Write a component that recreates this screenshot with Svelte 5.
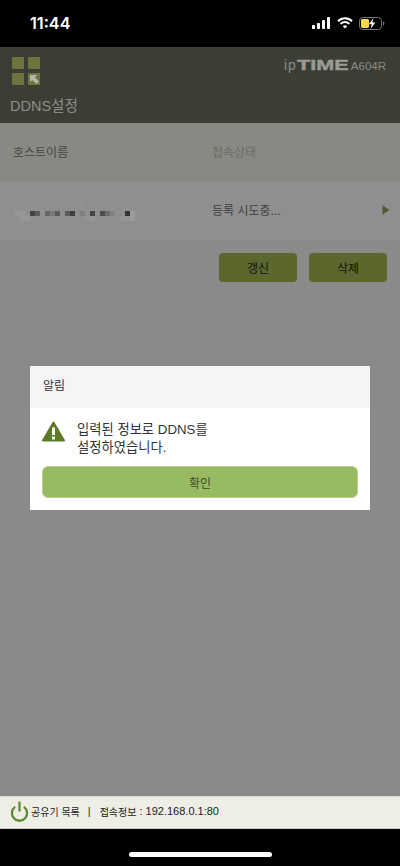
<script>
    // mosaic over the host name, one list per row of 5px cells
    const base = '#8f8f8f';
    const mosaic = [
        [base,base,base,base,base,base,base,base,base,base,base,base,base,'#929292',base,base,base,base,base,base,base,base,base,base,base],
        [base,base,base,base,base,base,base,base,base,base,base,base,base,'#939393',base,base,base,base,base,base,base,base,base,base,base],
        ['#989898','#979797',base,'#444','#5c5c5c',base,'#666','#7b7b7b','#5a5a5a',base,'#5c5c5c','#3f3f3f',base,'#7f7f7f',base,'#444',base,'#4c4c4c','#6d6d6d','#828282',base,base,'#333','#9c9c9c',base],
        [base,'#979797','#979797',base,base,base,base,base,base,base,base,base,base,base,'#949494','#979797',base,base,base,base,base,'#949494','#969696','#9b9b9b',base],
    ];
</script>

<div class="page">
    <div class="status">
        <span class="time">11:44</span>
        <div class="status-icons">
            <svg width="19" height="12" viewBox="0 0 19 12" fill="#fff">
                <rect x="0" y="8" width="3" height="4" rx="0.8"/>
                <rect x="5" y="6" width="3" height="6" rx="0.8"/>
                <rect x="10" y="3" width="3" height="9" rx="0.8"/>
                <rect x="15" y="0" width="3" height="12" rx="0.8"/>
            </svg>
            <svg width="16" height="12" viewBox="0 0 16 12" fill="none" stroke="#fff" stroke-width="2">
                <path d="M1 4.2a10 10 0 0 1 14 0"/>
                <path d="M3.6 6.9a6.2 6.2 0 0 1 8.8 0"/>
                <path d="M8 11.6 5.9 9.4a3 3 0 0 1 4.2 0z" fill="#fff" stroke="none"/>
            </svg>
            <svg width="26" height="13" viewBox="0 0 26 13">
                <rect x="0.5" y="0.5" width="22" height="12" rx="3.2" fill="none" stroke="#77766f"/>
                <rect x="2" y="2" width="8" height="9" rx="1.4" fill="#f6d94a"/>
                <path d="M14.5 1 9.8 7.2h3l-1.3 4.8 4.9-6.4h-3.1z" fill="#fff"/>
                <path d="M24 4.5c1 .3 1.4 1.2 1.4 2s-.4 1.7-1.4 2z" fill="#77766f"/>
            </svg>
        </div>
    </div>

    <header>
        <div class="header-top">
            <div class="logo-grid">
                <span></span>
                <span></span>
                <span></span>
                <span class="arrow">
                    <svg width="12" height="12" viewBox="0 0 12 12" fill="#b6b8a6">
                        <path d="M2 2h7L7 4.2 11 8.4 8.4 11 4.2 7 2 9z"/>
                    </svg>
                </span>
            </div>
            <div class="brand">
                <span class="ip">ip</span><span class="brand-time">TIME</span><span class="model">A604R</span>
            </div>
        </div>
        <h1>DDNS설정</h1>
    </header>

    <main>
        <div class="table-head">
            <span class="col-host">호스트이름</span>
            <span class="col-state">접속상태</span>
        </div>
        <div class="table-row">
            <div class="mosaic">
                {#each mosaic as line}
                    <div class="mosaic-line">
                        {#each line as cell}
                            <i style="background:{cell}"></i>
                        {/each}
                    </div>
                {/each}
            </div>
            <span class="row-state">등록 시도중...</span>
            <svg class="row-arrow" width="8" height="10" viewBox="0 0 8 10" fill="#50592f">
                <path d="M0.5 0.3 7.5 5 0.5 9.7z"/>
            </svg>
        </div>
        <div class="actions">
            <button>갱신</button>
            <button>삭제</button>
        </div>

        <div class="dialog">
            <div class="dialog-title">알림</div>
            <div class="dialog-body">
                <div class="message">
                    <svg width="23" height="21" viewBox="0 0 23 21">
                        <path d="M11.5 1.5 22 19.5H1z" fill="#5c7a28" stroke="#5c7a28" stroke-width="2" stroke-linejoin="round"/>
                        <rect x="10" y="6.5" width="3" height="7.5" fill="#fff"/>
                        <rect x="10" y="15.5" width="3" height="3" fill="#fff"/>
                    </svg>
                    <p>입력된 정보로 DDNS를<br>설정하였습니다.</p>
                </div>
                <button class="confirm">확인</button>
            </div>
        </div>
    </main>

    <footer>
        <svg width="19" height="21" viewBox="0 0 20 22" fill="none" stroke="#5f8a2e" stroke-width="2.4">
            <path d="M5.4 6.2a8 8 0 1 0 9.2 0"/>
            <path d="M10 0.5V11"/>
        </svg>
        <span class="footer-ko">공유기 목록</span>
        <span class="footer-sep">|</span>
        <span class="footer-ko">접속정보</span>
        <span class="footer-addr">: 192.168.0.1:80</span>
    </footer>

    <div class="home-area">
        <div class="home-bar"></div>
    </div>
</div>

<style>
    :global(body) {
        margin: 0;
        background: #000;
    }

    .page {
        width: 400px;
        height: 866px;
        display: flex;
        flex-direction: column;
        font-family: "Liberation Sans", "Noto Sans CJK KR", sans-serif;
        overflow: hidden;
    }

    .status {
        height: 47px;
        flex: none;
        background: #000;
        display: flex;
        align-items: center;
        justify-content: space-between;
        padding: 0 15px 0 30px;
        box-sizing: border-box;
    }

    .time {
        color: #fff;
        font-family: Inter, sans-serif;
        font-size: 16.2px;
        font-weight: 600;
        margin-bottom: 1px;
    }

    .status-icons {
        display: flex;
        align-items: center;
        gap: 6px;
        margin-bottom: 1px;
    }

    header {
        height: 76px;
        flex: none;
        background: #3c3e36;
        box-sizing: border-box;
        padding: 10px 14px 0 12px;
    }

    .header-top {
        display: flex;
        justify-content: space-between;
        align-items: flex-start;
    }

    .logo-grid {
        display: grid;
        grid-template-columns: 12px 12px;
        grid-auto-rows: 12px;
        gap: 4px;
    }

    .logo-grid span {
        background: #6f733d;
    }

    .logo-grid .arrow {
        display: flex;
    }

    .brand {
        display: flex;
        align-items: baseline;
        color: #8a8b85;
    }

    .ip {
        font-size: 14px;
        letter-spacing: 1px;
    }

    .brand-time {
        font-size: 14px;
        font-weight: 700;
        width: 50px;
        display: inline-block;
        transform: scaleX(1.55);
        transform-origin: left;
        color: #9a9b95;
        -webkit-text-stroke: 0.4px #9a9b95;
    }

    .model {
        font-size: 11.5px;
        margin-left: 4px;
    }

    h1 {
        margin: 9px 0 0 -2px;
        font-size: 14.5px;
        font-weight: 400;
        color: #8c8d87;
    }

    main {
        flex: 1;
        background: #8a8a8a;
        position: relative;
    }

    .table-head {
        height: 59px;
        background: #888983;
        display: flex;
        align-items: center;
        font-size: 12px;
        padding-bottom: 2px;
        box-sizing: border-box;
    }

    .col-host {
        margin-left: 13px;
        width: 199px;
        color: #454545;
    }

    .col-state {
        color: #6c6c68;
    }

    .table-row {
        height: 58px;
        background: #8f8f8f;
        display: flex;
        align-items: center;
        position: relative;
        font-size: 12px;
    }

    .mosaic {
        margin-left: 15px;
        width: 197px;
        display: flex;
        flex-direction: column;
    }

    .mosaic-line {
        display: flex;
    }

    .mosaic-line i {
        width: 5px;
        height: 5px;
    }

    .row-state {
        color: #3d3d3d;
        flex: 1;
        margin-bottom: 3px;
    }

    .row-arrow {
        margin-right: 10px;
        margin-bottom: 3px;
    }

    .actions {
        display: flex;
        justify-content: flex-end;
        gap: 12px;
        padding: 13px 13px 0 0;
    }

    .actions button {
        width: 78px;
        height: 29px;
        border: none;
        border-radius: 4px;
        background: #5b672d;
        color: #111;
        font-family: inherit;
        font-size: 12px;
        padding: 0;
    }

    .dialog {
        position: absolute;
        left: 30px;
        top: 243px;
        width: 340px;
        background: #fff;
    }

    .dialog-title {
        height: 42px;
        background: #f5f5f5;
        color: #333;
        font-size: 12px;
        display: flex;
        align-items: center;
        padding: 0 0 5px 13px;
        box-sizing: border-box;
    }

    .dialog-body {
        padding: 13px 12px 12px;
    }

    .message {
        display: flex;
        gap: 12px;
        align-items: flex-start;
    }

    .message svg {
        flex: none;
    }

    .message p {
        margin: 0;
        font-size: 13.3px;
        line-height: 18px;
        color: #333;
    }

    .confirm {
        display: block;
        width: 100%;
        height: 32px;
        margin-top: 9px;
        background: #98ba62;
        border: 1px solid #b9cf97;
        border-radius: 6px;
        color: #3f4a2c;
        font-family: inherit;
        font-size: 12px;
        padding: 0;
    }

    footer {
        height: 33px;
        flex: none;
        background: #eeeee6;
        border-top: 1px solid #d5d5cd;
        border-bottom: 1px solid #c9c9c2;
        box-sizing: border-box;
        display: flex;
        align-items: center;
        padding: 0 0 3px 10px;
        color: #222;
    }

    footer svg {
        flex: none;
        margin: 0 2px 0 0;
    }

    .footer-ko {
        font-size: 10px;
        white-space: nowrap;
    }

    .footer-addr {
        font-size: 11px;
        margin-left: 3px;
        white-space: nowrap;
    }

    .footer-sep {
        font-size: 11px;
        margin: 0 9px 0 8px;
    }

    .home-area {
        height: 37px;
        flex: none;
        background: #000;
        display: flex;
        justify-content: center;
        padding-top: 23px;
        box-sizing: border-box;
    }

    .home-bar {
        width: 143px;
        height: 5px;
        border-radius: 3px;
        background: #fff;
    }
</style>
